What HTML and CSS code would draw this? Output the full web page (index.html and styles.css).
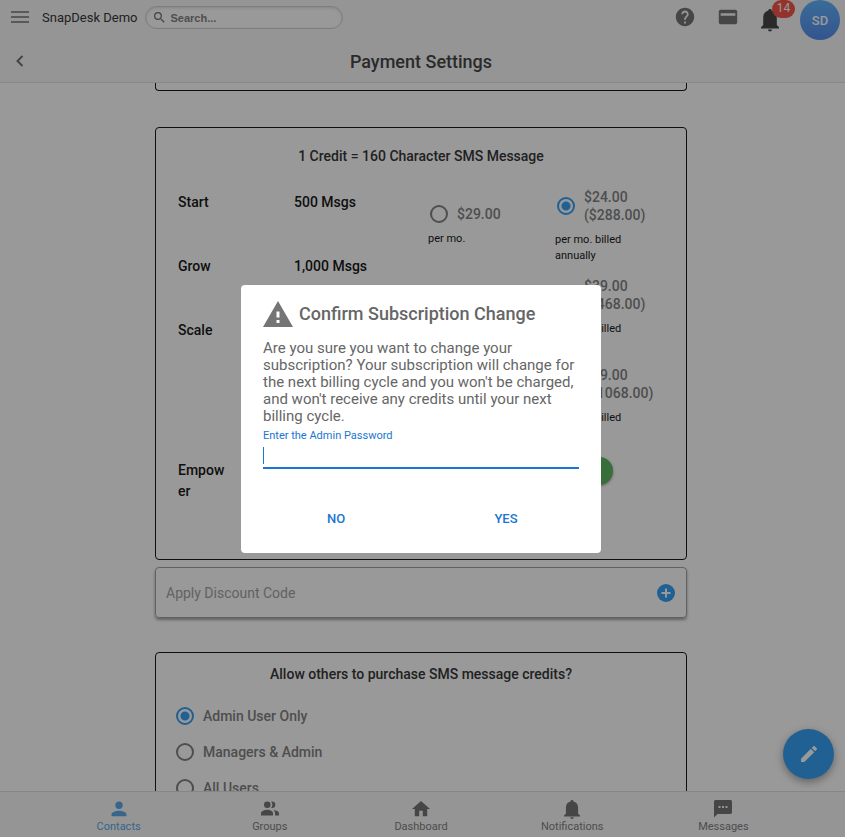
FILE: index.html
```html
<!DOCTYPE html>
<html lang="en">
<head>
    <meta charset="UTF-8">
    <meta name="viewport" content="width=device-width, initial-scale=1.0">
    <title>SnapDesk - Payment Settings</title>
    <link rel="stylesheet" href="styles.css">
</head>
<body>
    <header class="header">
        <div class="topbar">
            <button class="icon-btn menu-btn" type="button" aria-label="Menu">
                <svg width="18" height="12" viewBox="0 0 18 12"><path d="M0 1h18M0 6h18M0 11h18" stroke="currentColor" stroke-width="1.6"/></svg>
            </button>
            <span class="brand">SnapDesk Demo</span>
            <label class="search">
                <svg width="11" height="11" viewBox="3 3 18 18"><path d="M15.5 14h-.79l-.28-.27A6.47 6.47 0 0 0 16 9.5 6.5 6.5 0 1 0 9.5 16c1.61 0 3.09-.59 4.23-1.57l.27.28v.79l5 4.99L20.49 19l-4.99-5zm-6 0C7.01 14 5 11.99 5 9.5S7.01 5 9.5 5 14 7.01 14 9.5 11.99 14 9.5 14z" fill="currentColor"/></svg>
                <input type="search" placeholder="Search..." aria-label="Search">
            </label>
            <div class="actions">
                <button class="icon-btn" type="button" aria-label="Help">
                    <svg width="22" height="22" viewBox="0 0 24 24"><path fill="currentColor" d="M12 2C6.48 2 2 6.48 2 12s4.48 10 10 10 10-4.48 10-10S17.52 2 12 2zm1 17h-2v-2h2v2zm2.07-7.75l-.9.92C13.45 12.9 13 13.5 13 15h-2v-.5c0-1.1.45-2.1 1.17-2.83l1.24-1.26c.37-.36.59-.86.59-1.41 0-1.1-.9-2-2-2s-2 .9-2 2H8c0-2.21 1.79-4 4-4s4 1.79 4 4c0 .88-.36 1.68-.93 2.25z"/></svg>
                </button>
                <button class="icon-btn" type="button" aria-label="Billing">
                    <svg width="22" height="22" viewBox="0 0 24 24"><path fill="currentColor" d="M4 4h16a2 2 0 0 1 2 2v12a2 2 0 0 1-2 2H4a2 2 0 0 1-2-2V6c0-1.100.9-2 2-2zm0 4v2.500h16V8z"/></svg>
                </button>
                <button class="icon-btn bell-btn" type="button" aria-label="Notifications, 14 new">
                    <svg width="20" height="24" viewBox="0 0 20 24"><path fill="currentColor" d="M10 1c1 0 1.700.7 1.700 1.600C15 3.500 16.800 6.200 16.800 9.500V17l2.200 2.200V20.500H1v-1.300L3.200 17V9.500c0-3.300 1.800-6 5.100-6.900C8.300 1.700 9 1 10 1zM8 21.500h4c0 1.100-.9 2-2 2s-2-.9-2-2z"/></svg>
                    <span class="badge">14</span>
                </button>
                <button class="avatar" type="button">SD</button>
            </div>
        </div>
        <div class="titlebar">
            <button class="icon-btn back-btn" type="button" aria-label="Back">
                <svg width="8" height="12" viewBox="0 0 8 12"><path d="M6.500 1L1.500 6l5 5" fill="none" stroke="currentColor" stroke-width="2"/></svg>
            </button>
            <h1>Payment Settings</h1>
        </div>
    </header>

    <main class="content">
        <div class="card card-end"></div>

        <section class="card plans">
            <h2>1 Credit = 160 Character SMS Message</h2>
            <div class="plan-grid">
                <ul class="plan-names">
                    <li>Start</li>
                    <li>Grow</li>
                    <li class="tall">Scale</li>
                    <li>Empower</li>
                </ul>
                <ul class="plan-amounts">
                    <li>500 Msgs</li>
                    <li>1,000 Msgs</li>
                </ul>
                <div class="monthly">
                    <div class="option">
                        <label class="radio"><input type="radio" name="plan"><span>$29.00</span></label>
                        <p>per mo.</p>
                    </div>
                </div>
                <div class="yearly">
                    <div class="option">
                        <label class="radio"><input type="radio" name="plan" checked><span>$24.00 ($288.00)</span></label>
                        <p>per mo. billed annually</p>
                    </div>
                    <div class="option">
                        <label class="radio"><input type="radio" name="plan"><span>$39.00 ($468.00)</span></label>
                        <p>per mo. billed annually</p>
                    </div>
                    <div class="option">
                        <label class="radio"><input type="radio" name="plan"><span>$89.00 ($1068.00)</span></label>
                        <p>per mo. billed annually</p>
                    </div>
                    <button class="chat-btn" type="button">Chat</button>
                </div>
            </div>
        </section>

        <form class="discount">
            <input type="text" placeholder="Apply Discount Code" aria-label="Apply Discount Code">
            <button class="icon-btn" type="button" aria-label="Add code">
                <svg width="18" height="18" viewBox="0 0 18 18"><circle cx="9" cy="9" r="9" fill="currentColor"/><path d="M9 4.500v9M4.500 9h9" stroke="#fff" stroke-width="2"/></svg>
            </button>
        </form>

        <section class="card permissions">
            <h2>Allow others to purchase SMS message credits?</h2>
            <label class="radio"><input type="radio" name="allow" checked><span>Admin User Only</span></label>
            <label class="radio"><input type="radio" name="allow"><span>Managers &amp; Admin</span></label>
            <label class="radio"><input type="radio" name="allow"><span>All Users</span></label>
        </section>
    </main>

    <nav class="tabs">
        <a href="#contacts" class="active">
            <svg width="20" height="20" viewBox="0 0 20 20"><path fill="currentColor" d="M10 10a3.700 3.700 0 1 0 0-7.400 3.700 3.700 0 0 0 0 7.400zm0 1.700c-2.700 0-7.500 1.200-7.500 3.700v1.900h15v-1.900c0-2.500-4.800-3.700-7.500-3.700z"/></svg>
            <span>Contacts</span>
        </a>
        <a href="#groups">
            <svg width="20" height="20" viewBox="0 0 20 20"><path fill="currentColor" d="M7.300 9a3.300 3.300 0 1 0 0-6.600 3.300 3.300 0 0 0 0 6.600zm4.700 0a3.300 3.300 0 1 0 0-6.600c-.3 0-.6 0-.9.100a5 5 0 0 1 0 6.400c.3.100.6.100.9.100zM7.300 10.700C4.800 10.700 1 11.900 1 14.300v2.200h12v-2.200c0-2.400-3.400-3.600-5.700-3.600zm6.200.2c.9.800 1.600 1.900 1.600 3.400v2.200H19v-2.200c0-2-3-3.100-5.500-3.400z"/></svg>
            <span>Groups</span>
        </a>
        <a href="#dashboard">
            <svg width="20" height="20" viewBox="0 0 20 20"><path fill="currentColor" d="M8.200 17.300v-5.500h3.600v5.500h4.400V10H19l-9-8-9 8h2.800v7.300z"/></svg>
            <span>Dashboard</span>
        </a>
        <a href="#notifications">
            <svg width="20" height="20" viewBox="0 0 20 20"><path fill="currentColor" d="M10 1c.8 0 1.400.6 1.400 1.400 2.900.7 4.700 3 4.700 5.900v6.400l2 1.900v.9H1.900v-.9l2-1.900V8.300c0-2.900 1.800-5.200 4.700-5.900C8.600 1.600 9.200 1 10 1zM8.200 18.200h3.600c0 1-.8 1.600-1.800 1.600s-1.800-.6-1.800-1.600z"/></svg>
            <span>Notifications</span>
        </a>
        <a href="#messages">
            <svg width="20" height="20" viewBox="0 0 20 20"><path fill="currentColor" fill-rule="evenodd" d="M2.700 1h14.600c1 0 1.700.7 1.700 1.700v10.600c0 1-.7 1.700-1.700 1.700H4.500L1 18.500V2.700C1 1.700 1.700 1 2.700 1zM5.500 7v2h2V7zm3.500 0v2h2V7zm3.500 0v2h2V7z"/></svg>
            <span>Messages</span>
        </a>
    </nav>

    <button class="fab" type="button" aria-label="Compose">
        <svg width="16" height="16" viewBox="3 3 18 18"><path fill="currentColor" d="M3 17.250V21h3.750L17.810 9.940l-3.750-3.750L3 17.250zM20.710 7.040a1 1 0 0 0 0-1.410l-2.340-2.340a1 1 0 0 0-1.410 0l-1.830 1.830 3.750 3.750 1.830-1.830z"/></svg>
    </button>

    <div class="overlay">
        <form class="modal" role="dialog" aria-modal="true" aria-labelledby="modalTitle">
            <div class="modal-head">
                <svg width="30" height="26" viewBox="0 0 30 26"><path fill="currentColor" fill-rule="evenodd" d="M15 0l15 26H0zM13.500 10.500v6h3v-6zm0 8.500v3h3v-3z"/></svg>
                <h2 id="modalTitle">Confirm Subscription Change</h2>
            </div>
            <p>Are you sure you want to change your subscription? Your subscription will change for the next billing cycle and you won't be charged, and won't receive any credits until your next billing cycle.</p>
            <label for="adminPassword">Enter the Admin Password</label>
            <input type="password" id="adminPassword" autofocus>
            <div class="modal-actions">
                <button type="button">NO</button>
                <button type="button">YES</button>
            </div>
        </form>
    </div>
</body>
</html>
```
FILE: styles.css
```css
* {
    box-sizing: border-box;
}
body {
    font-family: Roboto, "Liberation Sans", sans-serif;
    font-size: 15px;
    margin: 0;
    height: 100vh;
    display: flex;
    flex-direction: column;
    overflow: hidden;
    background-color: #fff;
    color: #000;
}
h1, h2, p, ul {
    margin: 0;
    padding: 0;
}
ul {
    list-style: none;
}
button, input {
    font-family: inherit;
}
button {
    border: none;
    cursor: pointer;
}
svg {
    display: block;
    flex: none;
}
.icon-btn {
    background: none;
    padding: 0;
    color: #666;
}

/* Header */
.header {
    flex: none;
    background-color: #f7f7f7;
    border-bottom: 1px solid #e0e0e0;
}
.topbar {
    height: 40px;
    display: flex;
    align-items: flex-start;
    padding: 0 5px 0 11px;
}
.menu-btn {
    margin-top: 11px;
}
.brand {
    margin: 8px 8px 0 13px;
    font-size: 13px;
    line-height: 20px;
    color: #222;
}
.search {
    display: flex;
    align-items: center;
    gap: 5px;
    width: 198px;
    height: 23px;
    margin-top: 6px;
    padding: 0 8px;
    border: 1px solid #ccc;
    border-radius: 12px;
    background-color: #fff;
    box-shadow: inset 0 1px 3px rgba(0, 0, 0, 0.15);
    color: #666;
}
.search input {
    width: 100%;
    min-width: 0;
    padding: 0;
    border: none;
    outline: none;
    background: none;
    font: bold 11px "Liberation Sans", Arial, sans-serif;
}
.search input::placeholder {
    color: #757575;
}
.actions {
    display: flex;
    margin-left: auto;
    align-items: flex-start;
    gap: 21px;
}
.actions .icon-btn {
    margin-top: 6px;
}
.actions .bell-btn {
    position: relative;
    margin-top: 8px;
    margin-right: -1px;
    color: #333;
}
.badge {
    position: absolute;
    top: -8px;
    left: 12px;
    width: 23px;
    height: 18px;
    border-radius: 9px;
    background-color: #f44336;
    color: #fff;
    font-size: 12px;
    line-height: 16px;
    text-align: center;
}
.avatar {
    width: 40px;
    height: 40px;
    padding: 0;
    border-radius: 50%;
    background: linear-gradient(#4facfe, #4481eb);
    color: #fff;
    font-size: 13px;
    font-weight: 500;
}
.titlebar {
    display: grid;
    grid-template-columns: 30px 1fr 30px;
    align-items: center;
    height: 42px;
    padding: 0 3px 0 0;
}
.back-btn {
    justify-self: end;
    margin-right: 6px;
}
.titlebar h1 {
    padding-top: 2px;
    font-size: 18px;
    line-height: 24px;
    font-weight: 500;
    text-align: center;
    color: #333;
}

/* Content */
.content {
    flex: 1;
    min-height: 0;
    overflow: hidden;
    padding-right: 3px;
}
.card,
.discount {
    width: 63%;
    min-width: 532px;
    margin: 0 auto;
    border: 1px solid #000;
    border-radius: 4px;
}
.card h2 {
    font-size: 14px;
    line-height: 20px;
    font-weight: 500;
    text-align: center;
    color: #222;
}
.card-end {
    height: 8px;
    margin-bottom: 36px;
    border-top: none;
    border-radius: 0 0 4px 4px;
}
.plans {
    padding: 18px 22px 57px;
}
.plan-grid {
    display: grid;
    grid-template-columns: 116fr 134fr 127fr 109fr;
    margin-top: 22px;
}
.plan-names li,
.plan-amounts li {
    min-height: 64px;
    padding-top: 4px;
    font-size: 14px;
    line-height: 21px;
    font-weight: 500;
}
.plan-names li {
    padding-right: 66px;
    word-break: break-all;
}
.plan-names .tall {
    min-height: 140px;
}
.plan-names li:last-child {
    min-height: 0;
}
.radio {
    display: flex;
    align-items: center;
    gap: 9px;
    font-size: 14px;
    line-height: 18px;
    font-weight: 500;
    color: #757575;
}
.radio input {
    appearance: none;
    flex: none;
    width: 18px;
    height: 18px;
    margin: 0;
    border: 2px solid #757575;
    border-radius: 50%;
}
.radio input:checked {
    border-color: #2196f3;
    background: radial-gradient(circle, #2196f3 4px, transparent 5px);
}
.monthly {
    padding-top: 17px;
}
.option {
    margin-bottom: 13px;
}
.option .radio {
    padding-left: 2px;
}
.option p {
    margin-top: 8px;
    padding-right: 20px;
    font-size: 11px;
    line-height: 16px;
}
.chat-btn {
    width: 58px;
    height: 28px;
    margin-top: 2px;
    padding: 0;
    border-radius: 14px;
    background-color: #4caf50;
    box-shadow: 0 1px 3px rgba(0, 0, 0, 0.4);
    color: #fff;
}
.discount {
    display: flex;
    align-items: center;
    height: 51px;
    margin-top: 7px;
    margin-bottom: 34px;
    padding: 0 11px 0 10px;
    border-color: #999;
    box-shadow: 0 2px 3px rgba(0, 0, 0, 0.4);
}
.discount input {
    flex: 1;
    min-width: 0;
    padding: 0;
    border: none;
    outline: none;
    background: none;
    font-size: 14px;
}
.discount input::placeholder {
    color: #999;
}
.discount .icon-btn {
    color: #2196f3;
}
.permissions {
    padding: 11px 20px;
}
.permissions h2 {
    margin-bottom: 14px;
}
.permissions .radio {
    height: 36px;
}

/* Bottom tabs */
.tabs {
    flex: none;
    display: grid;
    grid-template-columns: repeat(5, 1fr);
    height: 46px;
    padding: 7px 46px 0 43px;
    border-top: 1px solid #ddd;
    background-color: #f7f7f7;
}
.tabs a {
    display: flex;
    flex-direction: column;
    align-items: center;
    font-size: 11px;
    line-height: 16px;
    text-decoration: none;
    color: #737373;
}
.tabs svg {
    color: #666;
}
.tabs .active,
.tabs .active svg {
    color: #4a9fe8;
}

.fab {
    position: absolute;
    right: 11px;
    bottom: 58px;
    display: flex;
    align-items: center;
    justify-content: center;
    width: 51px;
    height: 50px;
    padding: 0;
    border-radius: 50%;
    background-color: #2196f3;
    box-shadow: 0 3px 8px rgba(0, 0, 0, 0.4);
    color: #fff;
}

/* Confirm dialog */
.overlay {
    position: fixed;
    inset: 0;
    display: flex;
    align-items: center;
    justify-content: center;
    padding-right: 3px;
    background-color: rgba(33, 33, 33, 0.46);
}
.modal {
    width: 360px;
    padding: 16px 22px 12px;
    border-radius: 4px;
    background-color: #fff;
    color: #666;
}
.modal-head {
    display: flex;
    align-items: center;
    gap: 6px;
    margin-bottom: 13px;
    color: #757575;
}
.modal-head h2 {
    font-size: 18px;
    line-height: 26px;
    font-weight: 500;
    color: #666;
}
.modal p {
    font-size: 15px;
    line-height: 17px;
}
.modal label {
    display: block;
    margin-top: 3px;
    font-size: 11px;
    line-height: 16px;
    color: #1976d2;
}
.modal input {
    width: 100%;
    height: 25px;
    padding: 0;
    border: none;
    border-bottom: 2px solid #1976d2;
    outline: none;
    font-size: 15px;
    caret-color: transparent;
}
.modal input:focus {
    background: linear-gradient(#1976d2, #1976d2) no-repeat left center / 1px 17px;
}
.modal-actions {
    display: grid;
    grid-template-columns: 1fr 1fr;
    margin: 28px -12px 0;
}
.modal-actions button {
    height: 44px;
    background: none;
    color: #1976d2;
    font-size: 13px;
    font-weight: 500;
}
```
